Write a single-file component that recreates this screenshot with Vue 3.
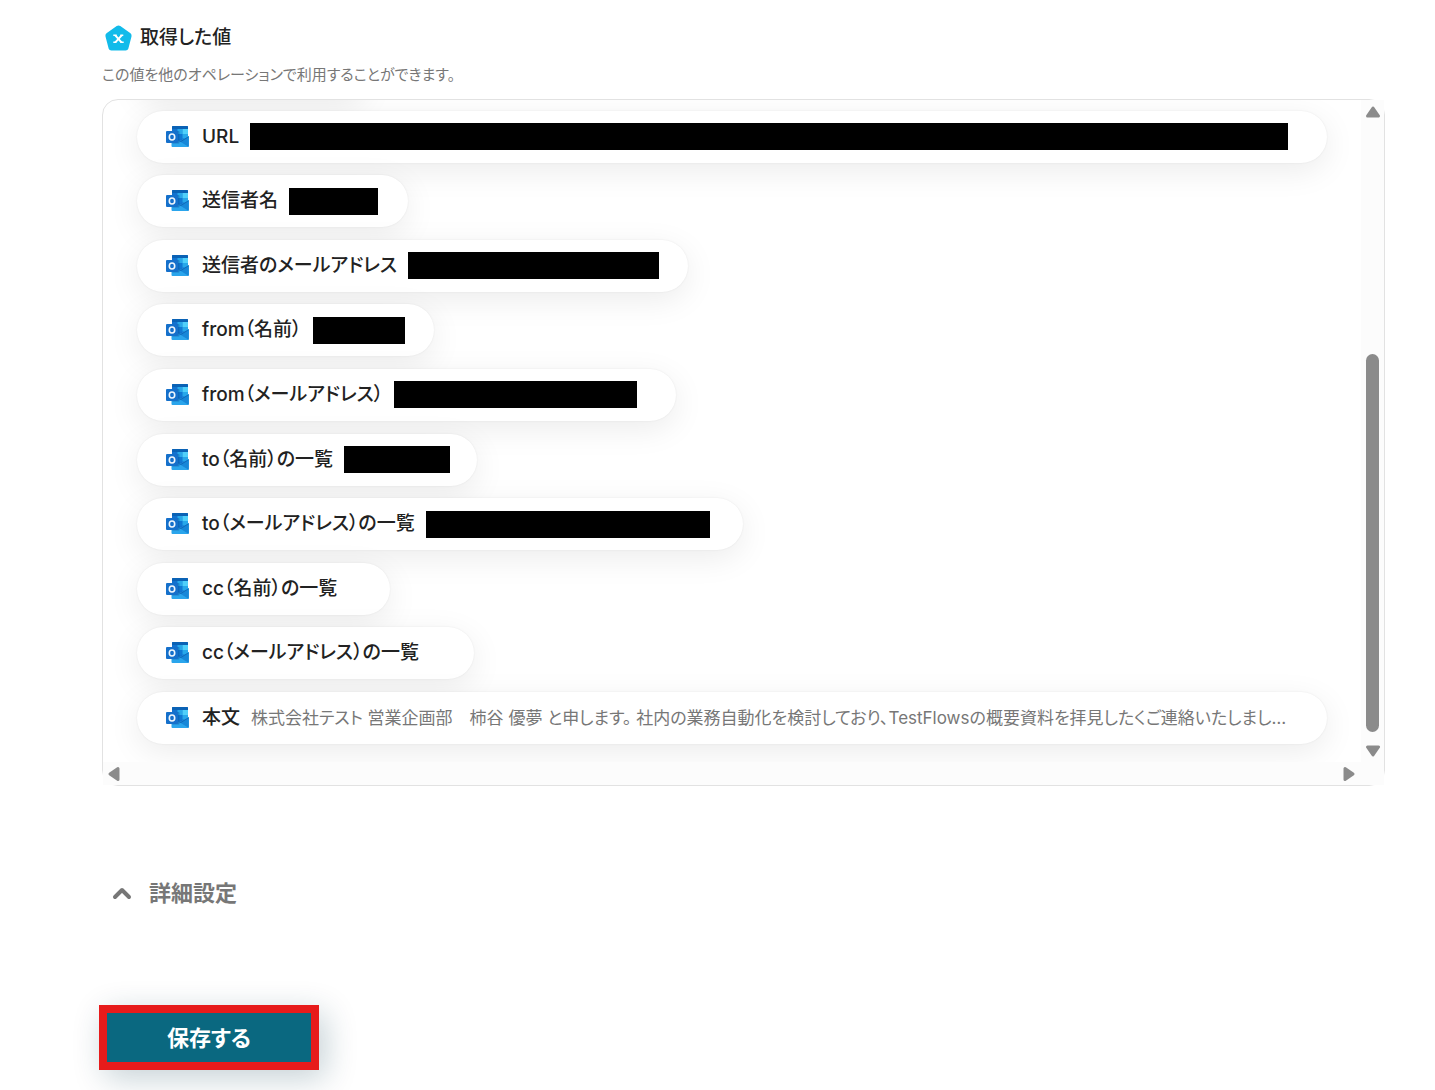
<template>
    <main class="page">
        <header class="head">
            <svg class="head-icon" viewBox="0 0 28 28" aria-hidden="true">
                <path d="M12.700 2.100Q14.500 .9 16.300 2.100L26.500 9.200Q28 10.500 27.500 12.500L24.300 24.700Q23.700 26.500 21.700 26.500H7.300Q5.300 26.500 4.700 24.700L1.500 12.500Q.9 10.500 2.500 9.200Z" fill="#12bbea" />
                <path d="M11.300 11.300l6.200 7M17.700 11.300l-6.400 7" fill="none" stroke="#fff" stroke-width="2" />
                <path d="M9.300 11.300h3.400M16.300 11.300h3M9.300 18.300h3M16.300 18.300h3.400" fill="none" stroke="#fff" stroke-width="1.400" />
            </svg>
            <h1>取得した値</h1>
        </header>
        <p class="note">この値を他のオペレーションで利用することができます。</p>

        <section class="panel">
            <div class="view">
                <ul class="list">
                    <li class="chip passed"></li>
                    <li v-for="item in items" :key="item.label" class="chip" :class="{ wide: item.wide }">
                        <svg class="mail" viewBox="0 0 24 24" aria-hidden="true">
                            <rect x="7" y="1" width="16" height="15" rx="1" fill="#1272cf" />
                            <path d="M7 4V2q0-1 1-1h14q1 0 1 1v2z" fill="#0a62b5" />
                            <path d="M12.500 4h5v5h-5z" fill="#28a8ea" />
                            <path d="M17.500 4H23v5h-5.500z" fill="#50d0fa" />
                            <path d="M12.500 9h5v5h-5z" fill="#0f78d4" />
                            <path d="M17.500 9H23v4.500h-5.500z" fill="#28a8ea" />
                            <path d="M6.500 14l8.500 2 8.800-5v10q0 1-1 1H7.500q-1 0-1-1z" fill="#2aa5ec" />
                            <path d="M14.500 16.300l9 5.400q.3-.3.300-.8V11.500z" fill="#1787d8" />
                            <path d="M13 15.800l1.500.9 9.300-5.500v.9l-8 5z" fill="#0f66b5" />
                            <rect x="7" y="6" width="7.500" height="12.500" rx="1" fill="#0b4f94" opacity=".4" />
                            <rect x="1" y="6" width="12" height="12" rx="1" fill="#1570cb" />
                            <ellipse cx="7" cy="12" rx="2.700" ry="3" fill="none" stroke="#f0f7fd" stroke-width="1.600" />
                        </svg>
                        <span class="label">{{ item.label }}</span>
                        <span v-if="item.text" class="text">{{ item.text }}</span>
                        <span v-else class="slot" :style="item.wide ? null : { width: item.slot + 'px' }">
                            <span v-if="item.mask" class="mask" :style="{ width: item.mask }"></span>
                        </span>
                    </li>
                </ul>
            </div>
            <div class="bar-y">
                <svg viewBox="0 0 16 12" aria-hidden="true"><path d="M8 2l5.500 8h-11z" /></svg>
                <span class="thumb"></span>
                <svg viewBox="0 0 16 12" aria-hidden="true"><path d="M8 10l5.500-8h-11z" /></svg>
            </div>
            <div class="bar-x">
                <svg viewBox="0 0 12 16" aria-hidden="true"><path d="M2 8l8-5.500v11z" /></svg>
                <svg viewBox="0 0 12 16" aria-hidden="true"><path d="M10 8l-8-5.500v11z" /></svg>
            </div>
        </section>

        <button type="button" class="detail">
            <svg viewBox="0 0 20 14" aria-hidden="true"><path d="M3 11l7-7 7 7" /></svg>
            詳細設定
        </button>
        <button type="button" class="save">保存する</button>
    </main>
</template>
<script setup>
import { ref } from 'vue';
// slot: 値の表示幅, mask: 黒塗りの幅
const items = ref([
    { label: 'URL', mask: '100%', wide: true },
    { label: '送信者名', slot: 92, mask: '89px' },
    { label: '送信者のメールアドレス', slot: 253, mask: '251px' },
    { label: 'from（名前）', slot: 94, mask: '92px' },
    { label: 'from（メールアドレス）', slot: 255, mask: '243px' },
    { label: 'to（名前）の一覧', slot: 106, mask: '106px' },
    { label: 'to（メールアドレス）の一覧', slot: 290, mask: '284px' },
    { label: 'cc（名前）の一覧', slot: 15 },
    { label: 'cc（メールアドレス）の一覧', slot: 17 },
    {
        label: '本文',
        wide: true,
        text: '株式会社テスト 営業企画部　柿谷 優夢 と申します。 社内の業務自動化を検討しており、TestFlowsの概要資料を拝見したくご連絡いたしまし…'
    }
])
</script>
<style>
body{
    margin: 0;
    background: #fff;
}
</style>
<style scoped>
.page{
    padding: 24px 50px 20px 102px;
    color: #222;
    font-family: Inter, "Noto Sans CJK JP", sans-serif;
    font-feature-settings: "palt";
}
.head{
    display: flex;
    align-items: center;
    gap: 8px;
    height: 28px;
    padding-left: 2px;
}
.head-icon{
    width: 28px;
    height: 28px;
}
h1{
    margin: 0;
    font-size: 19px;
    line-height: 28px;
    font-weight: 500;
}
.note{
    margin: 12px 0 14px;
    font-size: 15px;
    line-height: 21px;
    color: #777;
}
.panel{
    display: grid;
    grid-template-columns: minmax(0, 1fr) 23px;
    grid-template-rows: 662px 23px;
    border: 1px solid #e2e2e2;
    border-radius: 16px;
}
.view{
    overflow: hidden;
    border-top-left-radius: 15px;
}
.list{
    display: flex;
    flex-direction: column;
    align-items: flex-start;
    justify-content: space-between;
    height: 698px;
    margin: -54px 34px 0;
    padding: 0;
    list-style: none;
}
.chip{
    display: flex;
    align-items: center;
    box-sizing: border-box;
    flex: none;
    height: 52px;
    padding: 0 27px 0 28px;
    border-radius: 26px;
    background: #fff;
    box-shadow: 0 8px 32px rgba(0, 0, 0, 0.08), 0 0 2px rgba(0, 0, 0, 0.08);
    white-space: nowrap;
}
.passed{
    width: 230px;
}
.wide{
    width: 100%;
    padding-right: 39px;
}
.mail{
    flex: none;
    width: 24px;
    height: 24px;
    margin-right: 13px;
}
.label{
    margin-right: 11px;
    font-size: 19px;
    line-height: 28px;
    font-weight: 500;
}
.text{
    overflow: hidden;
    font-size: 17px;
    line-height: 24px;
    color: #777;
}
.slot{
    flex: none;
}
.wide .slot{
    flex: 1;
}
.mask{
    display: block;
    height: 27px;
    background: #000;
}
.bar-y{
    display: flex;
    flex-direction: column;
    align-items: center;
    padding: 6px 0 5px;
    background: #fcfcfc;
}
.bar-y svg{
    width: 16px;
    height: 12px;
}
.thumb{
    width: 13px;
    height: 378px;
    margin: auto 0 13px;
    border-radius: 7px;
    background: #8b8b8b;
}
.bar-x{
    grid-column: 1 / 3;
    display: flex;
    align-items: center;
    justify-content: space-between;
    padding: 0 29px 0 5px;
    background: #fcfcfc;
}
.bar-x svg{
    width: 12px;
    height: 16px;
}
.bar-x path,
.bar-y path{
    fill: #8b8b8b;
    stroke: #8b8b8b;
    stroke-width: 3;
    stroke-linejoin: round;
}
button{
    font-family: inherit;
    font-feature-settings: inherit;
    font-size: 22px;
    line-height: 32px;
    font-weight: 700;
    cursor: pointer;
}
.detail{
    display: flex;
    align-items: center;
    gap: 17px;
    margin: 91px 0 0 10px;
    padding: 0;
    border: 0;
    background: none;
    color: #777;
}
.detail svg{
    width: 20px;
    height: 14px;
    fill: none;
    stroke: #777;
    stroke-width: 4;
    stroke-linecap: round;
    stroke-linejoin: round;
}
.save{
    display: block;
    width: 220px;
    height: 65px;
    margin: 96px 0 0 -3px;
    padding: 0;
    border: 8px solid #e71b1b;
    background: #0a6880;
    color: #fff;
    box-shadow: 6px 8px 32px rgba(10, 60, 80, 0.24);
}
</style>
